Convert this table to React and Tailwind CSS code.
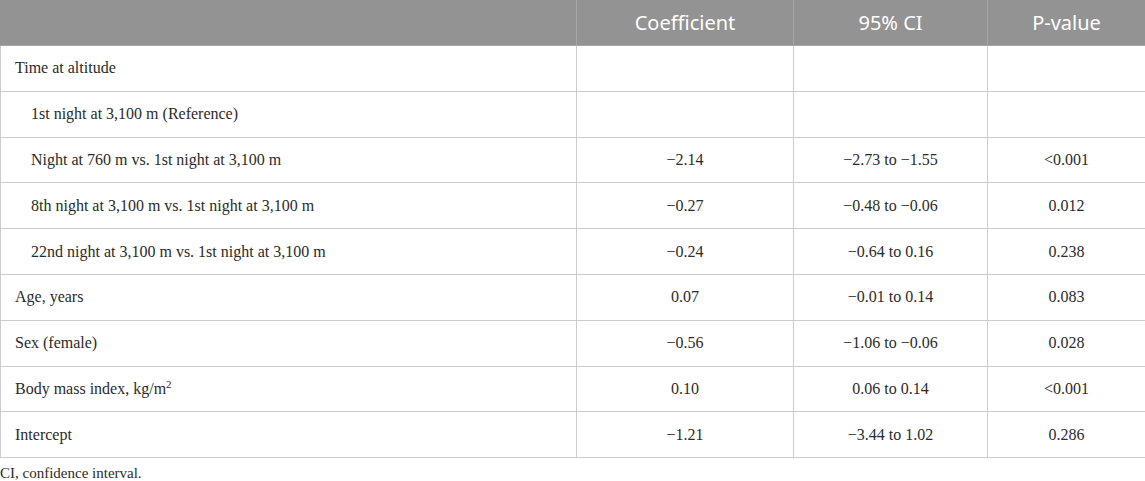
const rows = [
    { label: 'Time at altitude', indent: false, coef: '', ci: '', p: '' },
    { label: '1st night at 3,100 m (Reference)', indent: true, coef: '', ci: '', p: '' },
    { label: 'Night at 760 m vs. 1st night at 3,100 m', indent: true, coef: '\u22122.14', ci: '\u22122.73 to \u22121.55', p: '<0.001' },
    { label: '8th night at 3,100 m vs. 1st night at 3,100 m', indent: true, coef: '\u22120.27', ci: '\u22120.48 to \u22120.06', p: '0.012' },
    { label: '22nd night at 3,100 m vs. 1st night at 3,100 m', indent: true, coef: '\u22120.24', ci: '\u22120.64 to 0.16', p: '0.238' },
    { label: 'Age, years', indent: false, coef: '0.07', ci: '\u22120.01 to 0.14', p: '0.083' },
    { label: 'Sex (female)', indent: false, coef: '\u22120.56', ci: '\u22121.06 to \u22120.06', p: '0.028' },
    { label: 'BMI', indent: false, coef: '0.10', ci: '0.06 to 0.14', p: '<0.001' },
    { label: 'Intercept', indent: false, coef: '\u22121.21', ci: '\u22123.44 to 1.02', p: '0.286' },
];

export default function App() {
    return (
        <div className="w-[1145px] bg-white font-['Liberation_Serif',serif] text-[#2b2b2b]">
            <table className="w-full table-fixed border-collapse">
                <colgroup>
                    <col className="w-[576px]" />
                    <col className="w-[217px]" />
                    <col className="w-[194px]" />
                    <col className="w-[158px]" />
                </colgroup>
                <thead>
                    <tr className="h-[45px] bg-[#939393] font-['Noto_Sans',sans-serif] text-[20px] text-white">
                        <th className="border border-[#a6a6a6] border-l-[#939393] border-t-[#939393]"></th>
                        <th className="border border-[#a6a6a6] border-t-[#939393] text-center font-normal">Coefficient</th>
                        <th className="border border-[#a6a6a6] border-t-[#939393] text-center font-normal">95% CI</th>
                        <th className="border border-[#a6a6a6] border-r-[#939393] border-t-[#939393] text-center font-normal">P-value</th>
                    </tr>
                </thead>
                <tbody className="text-[16px]">
                    {rows.map((row) => (
                        <tr key={row.label} className="h-[45.8px]">
                            <td className={`border border-[#cccccc] ${row.indent ? 'pl-[30px]' : 'pl-[14px]'}`}>
                                {row.label === 'BMI' ? (
                                    <>Body mass index, kg/m<sup className="text-[11px]">2</sup></>
                                ) : row.label}
                            </td>
                            <td className="border border-[#cccccc] text-center">{row.coef}</td>
                            <td className="border border-[#cccccc] text-center">{row.ci}</td>
                            <td className="border border-[#cccccc] text-center">{row.p}</td>
                        </tr>
                    ))}
                </tbody>
            </table>
            <p className="mt-[5px] text-[15px] leading-[20px]">CI, confidence interval.</p>
        </div>
    );
}
